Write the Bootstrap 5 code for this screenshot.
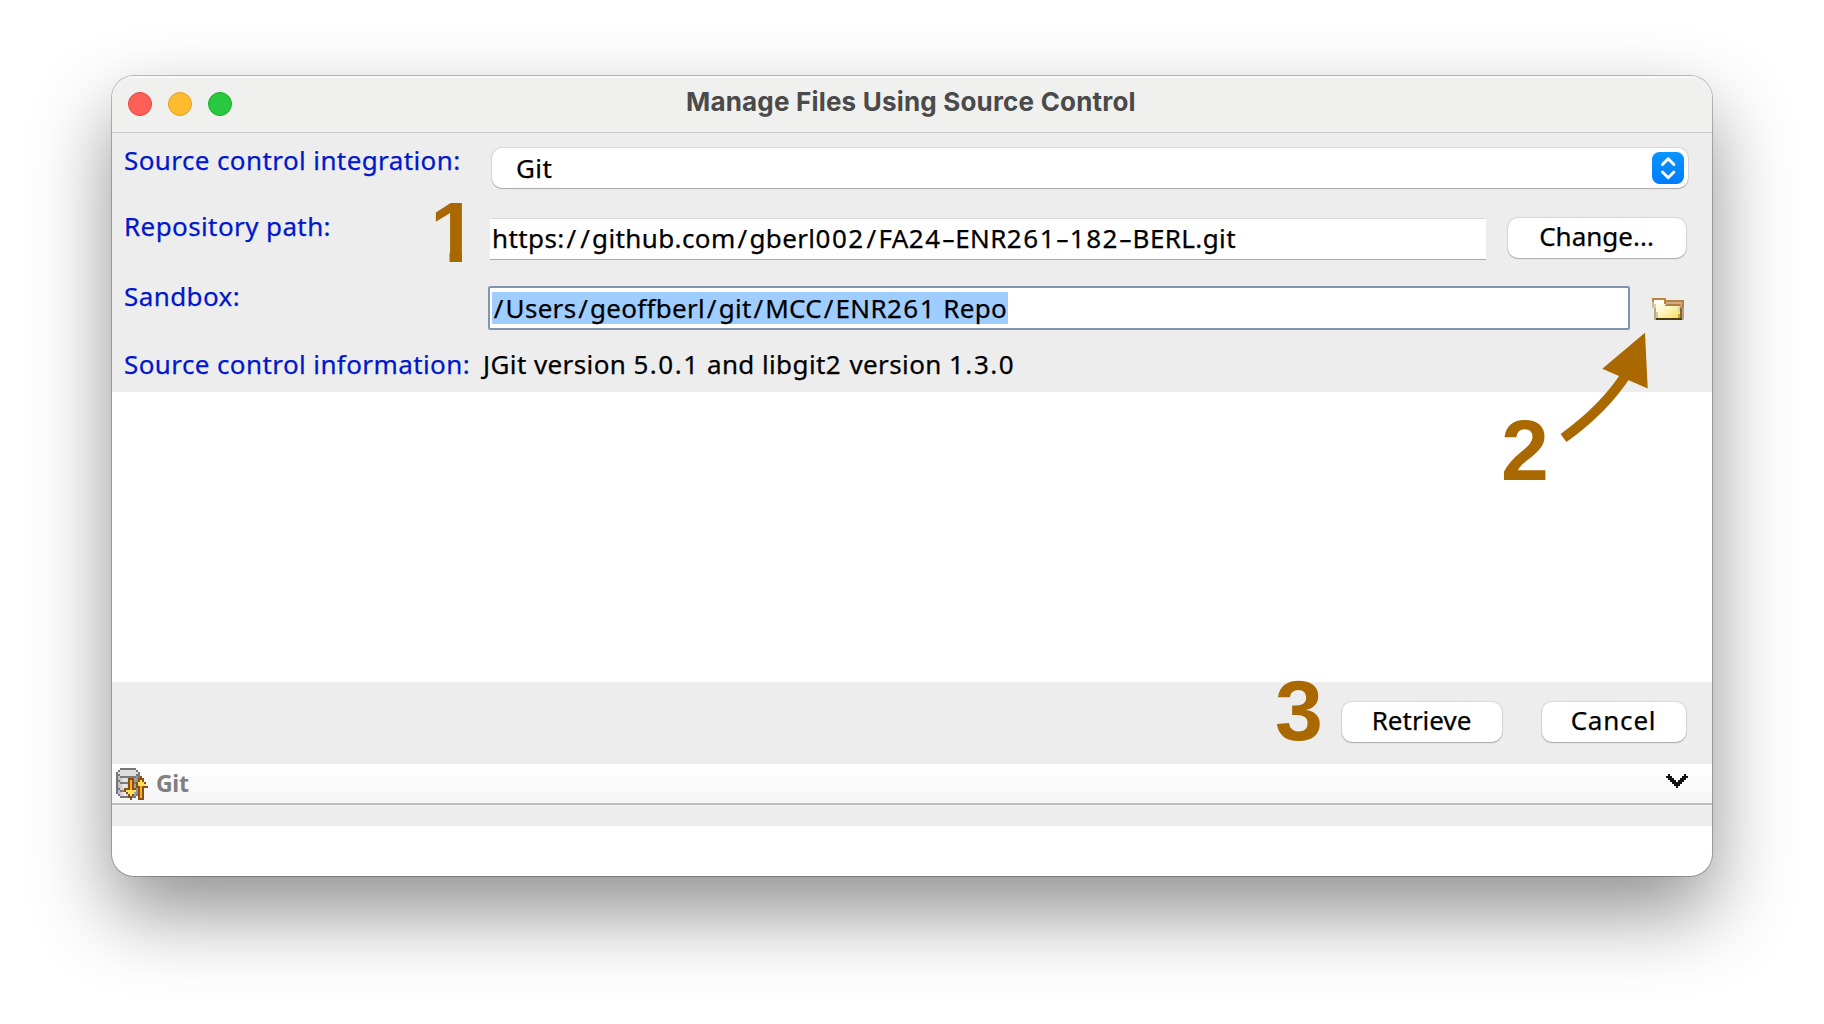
<!DOCTYPE html>
<html lang="en">
<head>
<meta charset="utf-8">
<meta name="viewport" content="width=device-width, initial-scale=1">
<title>Manage Files Using Source Control</title>
<link href="https://cdn.jsdelivr.net/npm/bootstrap@5.3.0/dist/css/bootstrap.min.css" rel="stylesheet">
<style>
  body { min-height: 100vh; padding: 76px 112px 0; background: #fff; font-family: "Noto Sans", sans-serif; font-size: 26px; color: #000; letter-spacing: .4px; white-space: nowrap; -webkit-text-stroke: .25px currentColor; }
  .window { width: 1600px; height: 800px; border-radius: 22px; background: #fff; box-shadow: 0 0 0 1px rgba(0,0,0,.24), 0 36px 80px rgba(0,0,0,.44); }
  .window-body { border-radius: 22px; overflow: hidden; }
  .titlebar { height: 57px; background: #f0f0ee; border-bottom: 1px solid #c8c8c8; padding-left: 16px; box-shadow: inset 0 2px 1px #f8f8f6; }
  .dot { width: 24px; height: 24px; border-radius: 50%; border: 1px solid; }
  .dot-r { background: #ff5f57; border-color: #e0443e; }
  .dot-y { background: #febc2e; border-color: #dea123; }
  .dot-g { background: #28c840; border-color: #1aab29; }
  .caption { font: 700 26px/32px Inter, sans-serif; letter-spacing: .19px; color: #4a4a4a; padding-left: 454px; margin-top: -4px; -webkit-text-stroke: 0; }
  .panel { background: #ededed; }
  .form-area { height: 259px; padding-left: 12px; }
  .line { height: 68px; line-height: 36px; }
  .line-first { height: 70px; }
  .field-label { color: #0018cc; width: 365px; flex: none; }
  .macbtn { height: 40px; line-height: 36px; border-radius: 10px; background: #fff; text-align: center; box-shadow: 0 0 1px 1px rgba(0,0,0,.09), 0 1px 1px rgba(0,0,0,.22); border: 0; padding: 0 1px 4px 0; }
  .combo { width: 1196px; line-height: 40px; margin-left: 3px; padding: 0 4px 0 24px; }
  .field { width: 996px; height: 42px; line-height: 38px; background: #fff; margin-left: 1px; padding-left: 2px; border-top: 1px solid #dcdcdc; border-bottom: 1px solid #aaa; }
  .field-focus { width: 1142px; height: 44px; border: 2px solid #8295ae; border-radius: 2px; background: #fff; padding: 4px 2px; line-height: 32px; margin-left: -1px; }
  .sel { background: #a0cdff; height: 32px; width: 516px; letter-spacing: .3px; }
  .dg { letter-spacing: 1.55px; }
  .sl { padding: 0 1.8px; }
  .hy { display: inline-block; width: 13.6px; text-align: center; transform: scaleX(1.6); }
  .list { height: 290px; }
  .buttons { height: 82px; padding: 20px 26px 0 0; gap: 40px; }
  .tool { height: 39px; background: linear-gradient(#fff, #f6f6f6); padding: 0 24px 0 4px; }
  .tool-name { font-weight: 700; font-size: 23px; letter-spacing: -.3px; line-height: 39px; color: #808080; margin-left: 8px; -webkit-text-stroke: 0; }
  .tool-line { height: 3px; background: #f4f4f4; border-top: 2px solid #bdbdbd; }
  .strip { height: 20px; }
  .callout-no { position: absolute; font: 700 86px/86px "Liberation Sans", Arial, sans-serif; letter-spacing: 0; color: #a96800; -webkit-text-stroke: 0; }
  .no-foot { clip-path: polygon(0 0, 100% 0, 100% 62px, 32px 62px, 32px 100%, 19.5px 100%, 19.5px 62px, 0 62px); }
  .arrow { position: absolute; left: 1440px; top: 250px; }
</style>
</head>
<body>
<main class="window position-relative">
  <div class="window-body h-100 d-flex flex-column">
    <header class="titlebar d-flex align-items-center">
      <div class="d-flex gap-3">
        <span class="dot dot-r"></span><span class="dot dot-y"></span><span class="dot dot-g"></span>
      </div>
      <div class="caption">Manage Files Using Source Control</div>
    </header>

    <section class="panel form-area">
      <div class="line line-first d-flex">
        <div class="field-label" style="padding-top:9px">Source control integration:</div>
        <div class="macbtn combo d-flex align-items-center justify-content-between" style="margin-top:15px">
          <span>Git</span>
          <svg width="32" height="32" viewBox="0 0 32 32">
            <defs><linearGradient id="b" x2="0" y2="1"><stop stop-color="#0a95ff"/><stop offset="1" stop-color="#007bff"/></linearGradient></defs>
            <rect width="32" height="32" rx="7.5" fill="url(#b)"/>
            <path d="M10.5 12.5 16.2 6.8 21.9 12.5M10.5 20 16.2 25.700 21.900 20" fill="none" stroke="#fff" stroke-width="3" stroke-linecap="round" stroke-linejoin="round"/>
          </svg>
        </div>
      </div>
      <div class="line d-flex">
        <div class="field-label" style="padding-top:5px">Repository path:</div>
        <div class="field" style="margin-top:15px">https:<span class="sl">/</span><span class="sl">/</span>github.com<span class="sl">/</span>gberl<span class="dg">002</span><span class="sl">/</span>FA<span class="dg">24</span><span class="hy">-</span>ENR<span class="dg">261</span><span class="hy">-</span><span class="dg">182</span><span class="hy">-</span>BERL.git</div>
        <button class="macbtn" style="margin:15px 0 0 22px;width:178px">Change...</button>
      </div>
      <div class="line d-flex">
        <div class="field-label" style="padding-top:7px">Sandbox:</div>
        <div class="field-focus" style="margin-top:15px"><div class="sel"><span class="sl">/</span>Users<span class="sl">/</span>geoffberl<span class="sl">/</span>git<span class="sl">/</span>MCC<span class="sl">/</span>ENR<span class="dg">261</span> Repo</div></div>
        <svg style="margin:27px 0 0 22px" width="32" height="22" viewBox="0 0 16 11" shape-rendering="crispEdges">
          <defs><linearGradient id="f" x2="1" y2="1"><stop offset=".1" stop-color="#fff"/><stop offset=".5" stop-color="#fdf6c0"/><stop offset="1" stop-color="#f8dc60"/></linearGradient></defs>
          <path d="M6 1h10v10H14V3H6z" fill="#b5853f"/>
          <path d="M7 2h8v2H7z" fill="#d2ac88"/><path d="M7 3h7v1H6z" fill="#b0803d"/>
          <path d="M14 3h1v4h-1z" fill="#c39a6e"/><path d="M15 5h1v5h-1z" fill="#b7a184"/>
          <path d="M0 0h7v3H0z" fill="#b9883e"/><path d="M0 2h1v3H0z" fill="#d6bc91"/>
          <path d="M1 1h5v3h8v6H2V5H1z" fill="url(#f)"/>
          <path d="M1 5h1v5H1z" fill="#bca785"/><path d="M1 3h1v2H1zM13 4h1v3h-1z" fill="#e4cfa0"/>
          <path d="M2 7h1v3H2z" fill="#d3c79f"/><path d="M14 5h1v5h-1z" fill="#8b642e"/><path d="M2 10h13v1H2z" fill="#4e3d0c"/><path d="M13 8h1v2h-1z" fill="#c9a73b"/><path d="M1 10h1v1H1zM15 10h1v1h-1z" fill="#b8ae9d"/>
        </svg>
      </div>
      <div class="line d-flex" style="padding-top:7px">
        <div class="field-label" style="width:359px">Source control information:</div>
        <div>JGit version <span class="dg">5.0.1</span> and libgit<span class="dg">2</span> version <span class="dg">1.3.0</span></div>
      </div>
    </section>

    <section class="list"></section>

    <section class="panel buttons d-flex justify-content-end">
      <button class="macbtn" style="width:160px">Retrieve</button>
      <button class="macbtn" style="width:144px;letter-spacing:.8px">Cancel</button>
    </section>

    <footer>
      <div class="tool d-flex">
        <svg class="mt-1" width="32" height="32" viewBox="0 0 16 16" shape-rendering="crispEdges">
          <defs><linearGradient id="c"><stop stop-color="#b8b8b8"/><stop offset=".35" stop-color="#ededed"/><stop offset="1" stop-color="#8a8a8a"/></linearGradient></defs>
          <path d="M2 0h8v1h1v1h1v11h-1v1h-1v1H2v-1H1v-1H0V2h1V1h1z" fill="#777"/>
          <path d="M2 1h8v1h1v11h-1v1H2v-1H1V2h1z" fill="url(#c)"/>
          <path d="M2 1h8v1h1v1h-1v1H2V3H1V2h1z" fill="#dedede"/>
          <path d="M1 3h1v1h8V3h1v1h-1v1H2V4H1zM1 6h1v1h8v1H2V7H1zM1 10h1v1h8v1H2v-1H1z" fill="#7c7c7c"/>
          <path d="M6 5h3v5h1v2H9v2H8v2H7v-1H6v-2H5v-1H4v-2h2z" fill="#8b4f18"/>
          <path d="M12 4h1v1h1v2h1v2h1v1h-2v6h-3v-6h-1V7h1V5h1z" fill="#8b4f18"/>
          <path d="M7 6h1v8H7z" fill="#f9b41e"/><path d="M5 11h5v1H9v1H8v1H7v-1H6v-1H5z" fill="#ffe15a"/>
          <path d="M12 6h1v9h-1z" fill="#f9b41e"/><path d="M12 6h1v1h1v1h1v1h-4V7h1z" fill="#ffe15a"/>
        </svg>
        <span class="tool-name">Git</span>
        <svg class="ms-auto" style="margin-top:10px" width="22" height="14" viewBox="0 0 11 7" shape-rendering="crispEdges">
          <path d="M1 0h1v1h1v1h1v1h1v1h1V3h1V2h1V1h1V0h1v1h1v1h-1v1H9v1H8v1H7v1H6v1H5V6H4V5H3V4H2V3H1V2H0V1h1z" fill="#111"/>
        </svg>
      </div>
      <div class="tool-line"></div>
      <div class="panel strip"></div>
    </footer>
  </div>

  <span class="callout-no no-foot" style="left:318px;top:113px">1</span>
  <span class="callout-no" style="left:1389px;top:331px">2</span>
  <span class="callout-no" style="left:1163px;top:591px">3</span>
  <svg class="arrow" width="110" height="120" viewBox="0 0 110 120">
    <path d="M11.500 112Q52.500 82.500 74.500 48" fill="none" stroke="#a96800" stroke-width="10"/>
    <path d="M93 6.700 50.300 42.700 95.700 62.500z" fill="#a96800"/>
  </svg>
</main>
<script src="https://cdn.jsdelivr.net/npm/bootstrap@5.3.0/dist/js/bootstrap.bundle.min.js"></script>
</body>
</html>
